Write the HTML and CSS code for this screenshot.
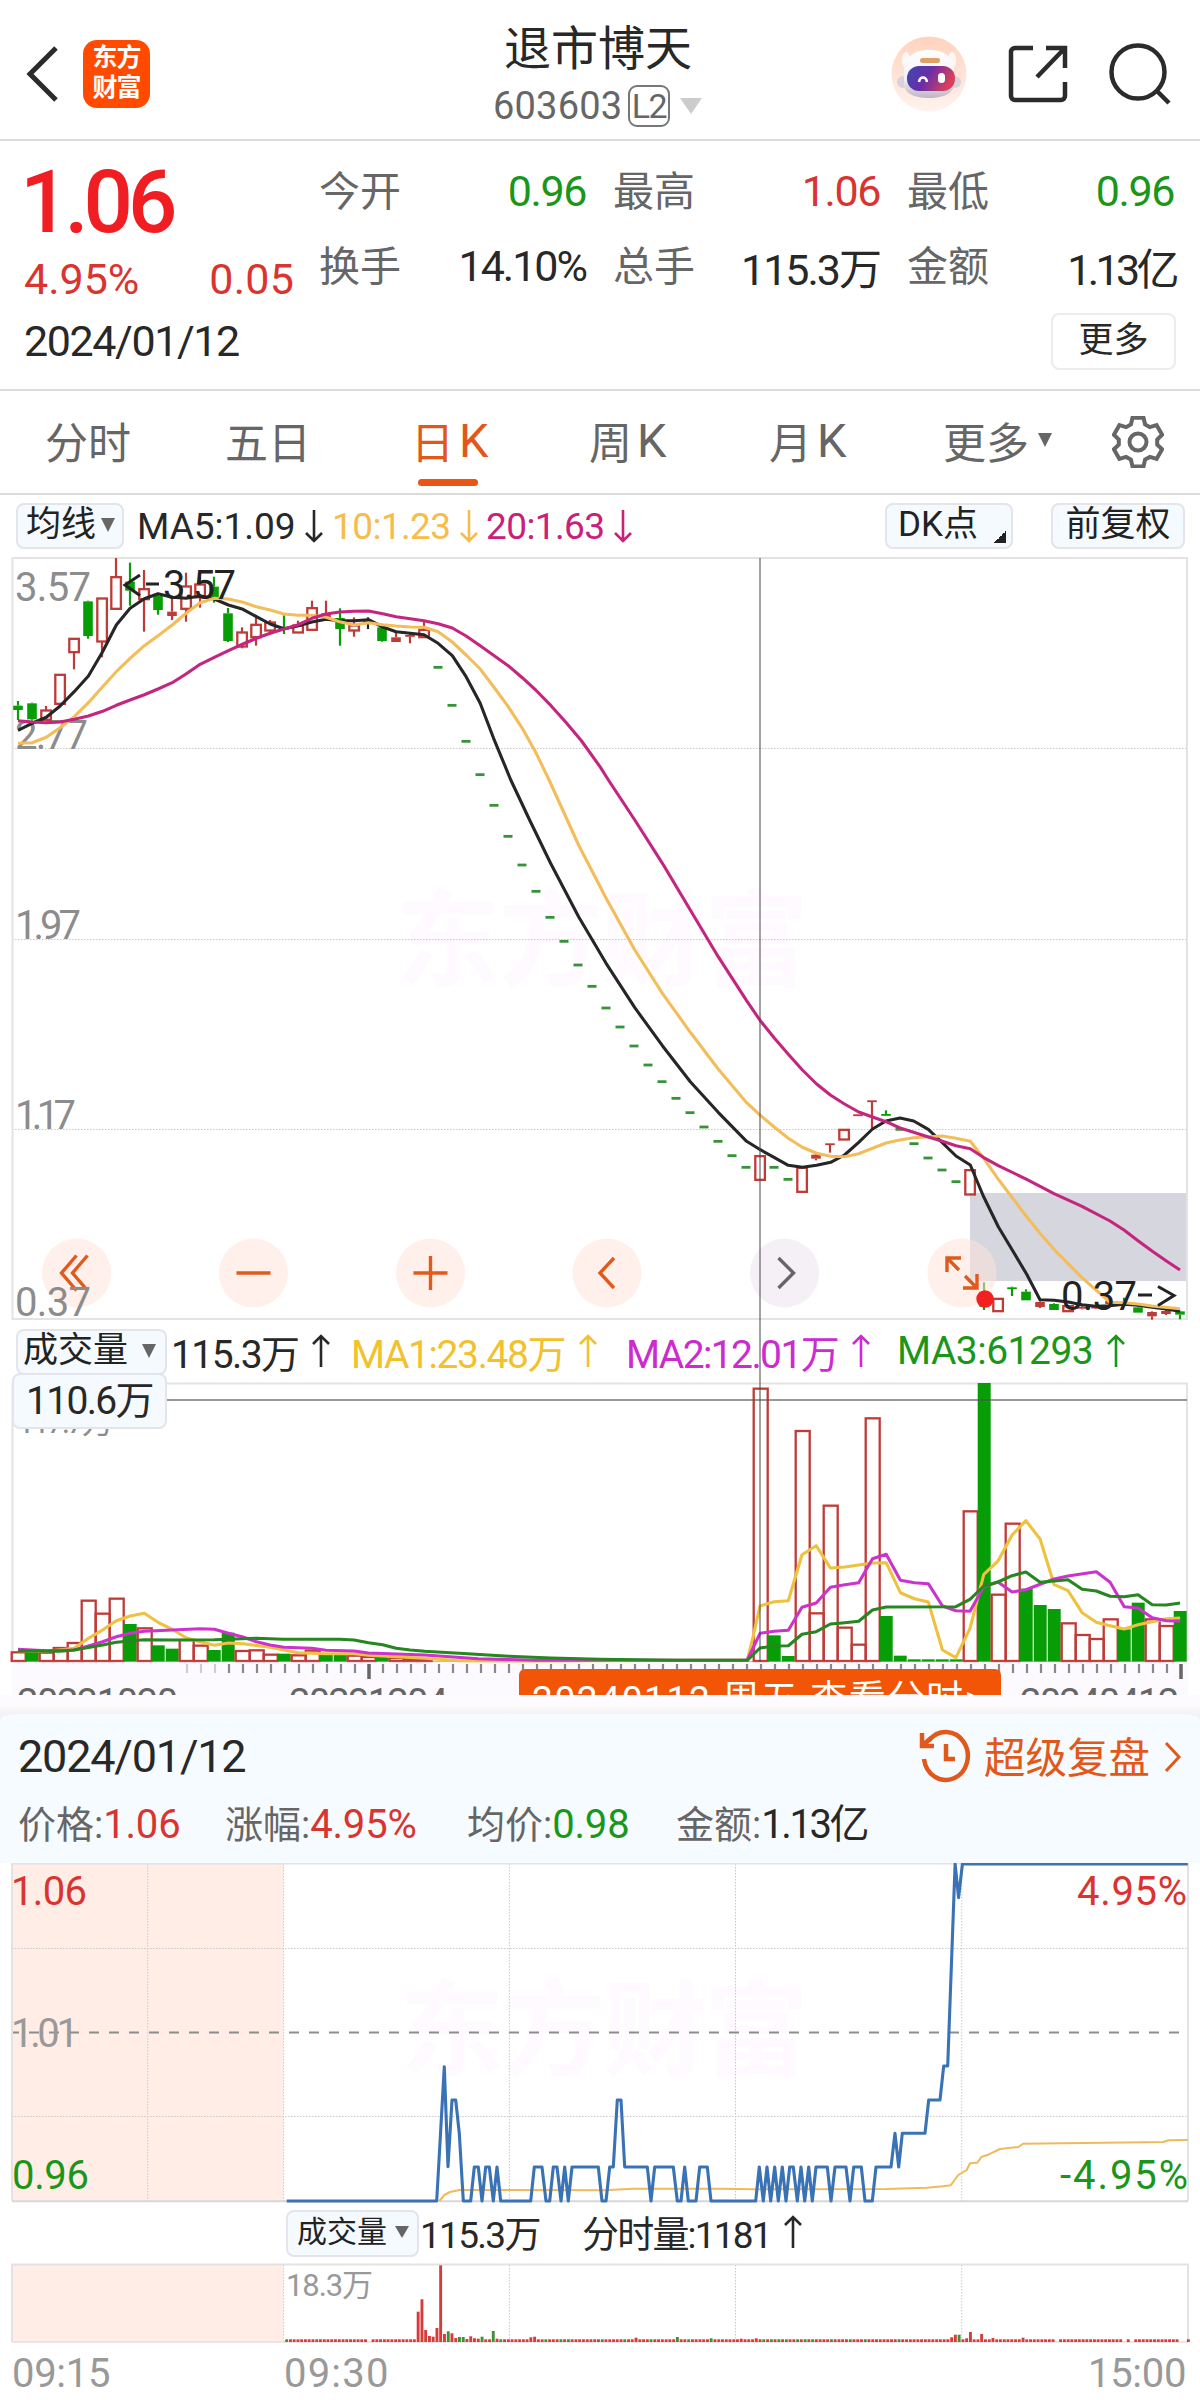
FILE: index.html
```html
<!DOCTYPE html>
<html lang="zh-CN">
<head>
<meta charset="utf-8">
<title>退市博天 603603</title>
<link rel="stylesheet" href="styles.css">
</head>
<body>
<main class="app">
  <header class="topbar">
    <svg class="back" viewBox="0 0 40 60"><path d="M33 4 7 30l26 26"/></svg>
    <div class="logo"><span>东方</span><span>财富</span></div>
    <div class="title">
      <h1>退市博天</h1>
      <div class="code"><span class="code-num">603603</span><span class="l2">L2</span><i class="tri tri-pale"></i></div>
    </div>
    <div class="actions">
      <svg class="robot" viewBox="0 0 76 76">
        <defs>
          <linearGradient id="halo" x1="0" y1="0" x2="0" y2="1"><stop offset="0" stop-color="#ffd3bd"/><stop offset="1" stop-color="#fff3ee"/></linearGradient>
          <linearGradient id="face" x1="0" y1="0" x2="1" y2="0.3"><stop offset="0" stop-color="#3c49ae"/><stop offset=".5" stop-color="#6a2da8"/><stop offset="1" stop-color="#d8405c"/></linearGradient>
          <linearGradient id="shell" x1="0" y1="0" x2="0" y2="1"><stop offset="0" stop-color="#fff"/><stop offset=".6" stop-color="#f4f0f5"/><stop offset="1" stop-color="#bdb6c4"/></linearGradient>
        </defs>
        <circle cx="38" cy="38" r="37.500" fill="url(#halo)"/>
        <ellipse cx="15" cy="24" rx="4" ry="8" fill="#fbf7f9"/><ellipse cx="61" cy="24" rx="4" ry="8" fill="#fbf7f9"/>
        <circle cx="12" cy="46" r="6" fill="#d9d2dc"/><circle cx="64" cy="46" r="6" fill="#d9d2dc"/>
        <path d="M13 36c0-15 10-22 25-22s25 7 25 22v12c0 9-10 14-25 14S13 57 13 48z" fill="url(#shell)"/>
        <rect x="29" y="22" width="20" height="5" rx="2.500" fill="#dfa266"/>
        <rect x="16" y="30" width="48" height="25" rx="12" fill="url(#face)"/>
        <path d="M28 46c1-6 7-6 8 0" fill="none" stroke="#fff" stroke-width="2.500"/><rect x="47" y="37" width="7" height="10" rx="3.500" fill="#fff"/>
      </svg>
      <svg class="share" viewBox="0 0 60 60"><path d="M25 4H7a4 4 0 0 0-4 4v44a4 4 0 0 0 4 4h46a4 4 0 0 0 4-4V38M38 4h19v20M57 4 29 33"/></svg>
      <svg class="search" viewBox="0 0 64 64"><circle cx="30" cy="30" r="26.500"/><path d="m49 49 12 12"/></svg>
    </div>
  </header>

  <section class="quote">
    <div class="price">
      <div class="last">1.06</div>
      <div class="change"><span>4.95%</span><span>0.05</span></div>
    </div>
    <dl class="stats">
      <div><dt>今开</dt><dd class="down">0.96</dd></div>
      <div><dt>最高</dt><dd class="up">1.06</dd></div>
      <div><dt>最低</dt><dd class="down">0.96</dd></div>
      <div><dt>换手</dt><dd>14.10%</dd></div>
      <div><dt>总手</dt><dd>115.3万</dd></div>
      <div><dt>金额</dt><dd class="tight">1.13亿</dd></div>
    </dl>
    <div class="quote-foot"><span class="date">2024/01/12</span><button class="more">更多</button></div>
  </section>

  <nav class="tabs">
    <a>分时</a><a>五日</a><a class="active">日<b>K</b></a><a>周<b>K</b></a><a>月<b>K</b></a><a class="tab-more">更多<i class="tri"></i></a>
    <svg class="gear" viewBox="0 0 52 52"><path d="M20.500 1.700h11l1.600 6.800 4.800 2.700 6.700-2 5.500 9.600-4.900 4.700v5.100l4.900 4.700-5.500 9.600-6.700-2-4.800 2.700-1.600 6.800h-11l-1.600-6.800-4.800-2.700-6.700 2-5.500-9.600 4.900-4.700v-5.100l-4.900-4.700 5.500-9.600 6.700 2 4.800-2.700z"/><circle cx="26" cy="26" r="8.500"/></svg>
  </nav>

  <section class="kline">
    <div class="legend ma-legend">
      <span class="chip chip-ma">均线<i class="tri"></i></span>
      <span class="ma5">MA5:1.09<svg class="arr" viewBox="0 0 18 34"><path d="M9 1v31M1 24l8 8 8-8"/></svg></span>
      <span class="ma10">10:1.23<svg class="arr" viewBox="0 0 18 34"><path d="M9 1v31M1 24l8 8 8-8"/></svg></span>
      <span class="ma20">20:1.63<svg class="arr" viewBox="0 0 18 34"><path d="M9 1v31M1 24l8 8 8-8"/></svg></span>
      <span class="chip chip-dk">DK点<i class="corner"></i></span>
      <span class="chip chip-adj">前复权</span>
    </div>
    <svg class="chart" id="k-chart" viewBox="0 557 1200 764" width="1200" height="764"></svg>
    <div class="legend vol-legend">
      <span class="chip chip-vol">成交量<i class="tri"></i></span>
      <span class="v0">115.3万<svg class="arr" viewBox="0 0 18 34"><path d="M9 33V2M1 10l8-8 8 8"/></svg></span>
      <span class="v1">MA1:23.48万<svg class="arr" viewBox="0 0 18 34"><path d="M9 33V2M1 10l8-8 8 8"/></svg></span>
      <span class="v2">MA2:12.01万<svg class="arr" viewBox="0 0 18 34"><path d="M9 33V2M1 10l8-8 8 8"/></svg></span>
      <span class="v3">MA3:61293<svg class="arr" viewBox="0 0 18 34"><path d="M9 33V2M1 10l8-8 8 8"/></svg></span>
    </div>
    <svg class="chart" id="vol-chart" viewBox="0 1382 1200 313" width="1200" height="313"></svg>
    <span class="cross-value">110.6万</span>
    <i class="crosshair"></i>
  </section>

  <section class="sheet">
    <div class="sheet-head">
      <span class="sheet-date">2024/01/12</span>
      <span class="review">
        <svg class="clock" viewBox="0 0 52 58"><path d="M5 31a22 24 0 1 0 5-18.500"/><path d="M3 5v13h12M4 17l8-7"/><path d="M27 16v15h9"/></svg>
        <span class="review-text">超级复盘</span>
        <svg class="chev" viewBox="0 0 18 32"><path d="m2 2 13 14L2 30"/></svg>
      </span>
    </div>
    <div class="sheet-stats">
      <span class="s1">价格:<b class="up">1.06</b></span><span class="s2">涨幅:<b class="up">4.95%</b></span><span class="s3">均价:<b class="down">0.98</b></span><span class="s4">金额:<b>1.13亿</b></span>
    </div>
  </section>
  <section class="intraday">
    <svg class="chart" id="min-chart" viewBox="0 1863 1200 340" width="1200" height="340"></svg>
    <div class="legend min-legend">
      <span class="chip chip-min">成交量<i class="tri"></i></span>
      <span class="m0">115.3万</span>
      <span class="m1">分时量:1181<svg class="arr" viewBox="0 0 18 34"><path d="M9 33V2M1 10l8-8 8 8"/></svg></span>
    </div>
    <svg class="chart" id="minvol-chart" viewBox="0 2263 1200 80" width="1200" height="80"></svg>
    <div class="times"><span>09:15</span><span class="open">09:30</span><span class="close">15:00</span></div>
  </section>
</main>
<script src="charts.js"></script>
</body>
</html>
```
FILE: styles.css
```css
* { box-sizing: border-box; }
body { margin: 0; background: #fff; color: #282828; font-family: Roboto, "Noto Sans CJK SC", sans-serif; }
h1, dl, dd { margin: 0; }
h1, b { font-weight: 400; }
svg { display: block; flex: none; }
.app { width: 1200px; height: 2400px; overflow: hidden; display: flex; flex-direction: column; }
.up { color: #d93430; }
.down { color: #1a961a; }

.tri { display: block; flex: none; border: solid transparent; border-width: 14px 7.500px 0; border-top-color: #666; }
.tri-pale { border-width: 16px 11px 0; border-top-color: #ccc; }

/* top bar */
.topbar { height: 141px; flex: none; display: grid; grid-template-columns: 83px 67px 1fr auto; align-items: center; border-bottom: 2px solid #dcdcdc; padding: 8px 28px 0 0; }
.back { width: 40px; height: 60px; margin-left: 23px; fill: none; stroke: #2b2b2b; stroke-width: 5; }
.logo { width: 67px; height: 68px; border-radius: 14px; background: #ff4a00; color: #fff; font-size: 25px; font-weight: 700; line-height: 30px; display: flex; flex-direction: column; align-items: center; justify-content: center; padding-bottom: 2px; letter-spacing: -1px; }
.title { margin-left: 304px; width: 300px; padding: 4px 0 0 39px; }
.title h1 { font-size: 47px; line-height: 60px; margin-left: 11px; margin-top: -4px; }
.code { display: flex; align-items: center; height: 46px; margin-top: 4px; color: #666; font-size: 38px; line-height: 46px; }
.code-num { width: 135px; letter-spacing: .2px; }
.l2 { width: 42px; height: 42px; border: 2px solid #777; border-radius: 9px; font-size: 34px; line-height: 38px; text-align: center; letter-spacing: -1.500px; margin-right: 10px; }
.actions { display: flex; align-items: center; }
.robot { width: 76px; height: 76px; }
.share { width: 60px; height: 60px; margin-left: 41px; fill: none; stroke: #2b2b2b; stroke-width: 4.500; }
.search { width: 64px; height: 64px; margin-left: 40px; fill: none; stroke: #2b2b2b; stroke-width: 4.500; }

/* quote */
.quote { height: 250px; flex: none; display: grid; grid-template-columns: 294px 1fr; grid-template-rows: 170px 1fr; padding: 0 24px 0 24px; border-bottom: 2px solid #dcdcdc; }
.price { width: 270px; }
.last { color: #f01d23; font-size: 87px; font-weight: 500; line-height: 90px; letter-spacing: -5px; margin: 16px 0 0 -4px; }
.change { display: flex; justify-content: space-between; color: #d93430; font-size: 43px; line-height: 50px; margin-top: 7px; }
.change span + span { letter-spacing: .2px; }
.stats { display: grid; grid-template-columns: 267px 267px 267px; column-gap: 27px; grid-auto-rows: 75px; padding-top: 12px; padding-left: 1px; }
.stats div { display: flex; justify-content: space-between; align-items: center; font-size: 43px; }
.stats dt { font-size: 41px; color: #666; margin-top: -5px; }
.stats dd { letter-spacing: -2px; }
.stats dd.tight { letter-spacing: -3.600px; margin-right: -2px; }
.stats dd.down, .stats dd.up { letter-spacing: -1.400px; }
.quote-foot { grid-column: 1 / 3; display: flex; justify-content: space-between; align-items: center; height: 60px; }
.date { font-size: 43px; letter-spacing: -1.400px; }
.more { width: 125px; height: 57px; border: 2px solid #ececf0; border-radius: 8px; background: #fff; font: 35px/50px Roboto, "Noto Sans CJK SC", sans-serif; color: #282828; padding: 0; }

/* tabs */
.tabs { height: 104px; flex: none; display: grid; grid-template-columns: 180px 186px 178px 180px 174px 193px 52px; padding-left: 45px; align-items: center; font-size: 43px; color: #666; border-bottom: 2px solid #dcdcdc; }
.tabs a { position: relative; display: flex; align-items: center; height: 100px; padding-bottom: 4px; }
.tabs b { margin-left: 5px; font-size: 47px; }
.tabs a.active { color: #e2581a; }
.tabs a.active::after { content: ""; position: absolute; left: 7px; bottom: 6px; width: 60px; height: 7px; border-radius: 4px; background: #ea5514; }
.tab-more .tri { margin-left: 9px; }
.gear { width: 52px; height: 52px; margin-left: -24px; fill: none; stroke: #666; stroke-width: 4; }

/* k line */
.kline { position: relative; flex: none; height: 1200px; }
.legend { display: flex; align-items: center; white-space: nowrap; }
.legend > span { display: flex; align-items: center; flex: none; }
.arr { width: 18px; height: 34px; fill: none; stroke: currentColor; stroke-width: 2.600; }
.chip { height: 46px; border: 2px solid #e3e4ec; border-radius: 8px; background: #f5faff; color: #222; font-size: 35px; line-height: 40px; padding-bottom: 2px; }
.ma-legend { height: 62px; font-size: 37px; padding-left: 16px; }
.chip-ma { width: 108px; padding-left: 8px; }
.chip-ma .tri { margin-left: 5px; }
.ma-legend .ma5 { width: 195px; margin-left: 13px; }
.ma-legend .ma10 { width: 154px; color: #f7bc4b; }
.ma-legend .ma20 { width: 160px; color: #c9207c; }
.ma-legend .arr { margin-left: 9px; }
.ma-legend .ma10, .ma-legend .ma20 { letter-spacing: -.6px; }
.chip-dk { width: 128px; padding-left: 11px; margin-left: 239px; position: relative; }
.corner { position: absolute; right: 5px; bottom: 4px; width: 12px; height: 12px; background: linear-gradient(135deg, transparent 50%, #222 50%); }
.chip-adj { width: 134px; margin-left: 38px; justify-content: center; }
.vol-legend { height: 61px; font-size: 39px; padding-left: 16px; }
.chip-vol { width: 151px; padding-left: 5px; }
.chip-vol .tri { margin-left: 14px; }
.vol-legend > span:not(.chip) { padding-bottom: 2px; }
.vol-legend .arr { margin-left: 14px; }
.v0 { margin-left: 4px; width: 180px; letter-spacing: -1.600px; }
.v1 { width: 275px; color: #f2c12e; letter-spacing: -1.400px; }
.v2 { width: 271px; color: #cc2bd0; letter-spacing: -1.600px; }
.v3 { color: #1a961a; letter-spacing: -.5px; }
.cross-value { position: absolute; left: 12px; top: 878px; width: 155px; height: 56px; border: 2px solid #e3e4ec; border-radius: 8px; background: #f5faff; font-size: 39px; line-height: 52px; text-align: center; letter-spacing: -1.700px; }
.crosshair { position: absolute; left: 759px; top: 63px; width: 2px; height: 1104px; background: rgba(70, 70, 70, .5); }

/* review sheet */
.sheet { flex: none; height: 168px; border-top: 11px solid #fdfbff; background: linear-gradient(#fbfafb, #f3f3f3 8px); display: flex; flex-direction: column; }
.sheet-head { margin-top: 8px; height: 85px; border-radius: 16px 16px 0 0 / 8px 8px 0 0; background: #f6fbff; display: flex; align-items: center; justify-content: space-between; padding: 0 18px 0 18px; }
.sheet-date { font-size: 45px; letter-spacing: -1.200px; }
.review { display: flex; align-items: center; color: #e2581a; font-size: 41.500px; white-space: nowrap; }
.review svg { fill: none; stroke: #e2581a; }
.review-text { padding-bottom: 4px; }
.clock { width: 52px; height: 58px; stroke-width: 4.500; margin-right: 13px; }
.chev { width: 18px; height: 32px; margin-left: 14px; stroke-width: 3; }
.sheet-stats { flex: 1; background: #f6fbff; display: flex; font-size: 38px; line-height: 51px; color: #666; padding-left: 18px; }
.sheet-stats b { font-size: 40px; letter-spacing: -.2px; }
.sheet-stats .s4 b { color: #282828; letter-spacing: -2.400px; }
.s1 { width: 207px; } .s2 { width: 242px; } .s3 { width: 209px; }

/* intraday */
.intraday { flex: none; }
.min-legend { height: 60px; padding-left: 286px; font-size: 37px; }
.chip-min { width: 133px; height: 47px; font-size: 30px; padding-left: 9px; }
.chip-min .tri { margin-left: 8px; border-width: 12px 7.500px 0; }
.m0 { margin-left: 1px; width: 162px; letter-spacing: -1.700px; }
.m1 { letter-spacing: -1.800px; }
.min-legend .m0, .min-legend .m1 { padding-bottom: 2px; }
.min-legend .arr { margin-left: 13px; }
.times { display: flex; font-size: 40px; line-height: 50px; color: #999; padding: 6px 14px 0 12px; }
.times span { letter-spacing: -.3px; width: 98px; }
.times .open { margin-left: 174px; width: 120px; letter-spacing: 1.200px; }
.times .close { margin-left: auto; }

/* chart marks */
.chart text { font-family: Roboto, "Noto Sans CJK SC", sans-serif; }
.frame { fill: none; stroke: #e3e3e3; stroke-width: 2; }
.dots { stroke: #c9c9c9; stroke-width: 1; stroke-dasharray: 1.500 1.500; }
.line { fill: none; stroke-width: 3.100; stroke-linejoin: round; }
.watermark { font-weight: 700; fill: #fefaff; font-size: 104px; }
```
FILE: charts.js
```js
const RED = '#bf3b38', GREEN = '#069d06';
const STEP = 14, X0 = 18;
const out = (id, parts) => { document.getElementById(id).innerHTML = parts.join(''); };
const cx = i => X0 + STEP * i;

const rect = (x, y, w, h, a) => `<rect x="${x}" y="${y}" width="${w}" height="${h}" ${a}/>`;
const line = (x1, y1, x2, y2, a) => `<line x1="${x1}" y1="${y1}" x2="${x2}" y2="${y2}" ${a}/>`;
const text = (s, x, y, size, fill, len, a = '') =>
  `<text x="${x}" y="${y}" font-size="${size}" fill="${fill}" ${len ? `textLength="${len}"` : ''} ${a}>${s}</text>`;

// Point lists are grouped by the panel scale they were sampled at: [originX, originY, scaleX, points]
const curve = (groups, stroke, cls = 'line', extra = '') => {
  const pts = groups.flatMap(([ox, oy, sx, p]) =>
    p.trim().split(/\s+/).map(q => { const [x, y] = q.split(',').map(Number); return `${(ox + x / sx).toFixed(1)},${(oy + y / 3).toFixed(1)}`; }));
  return `<polyline class="${cls}" stroke="${stroke}" points="${pts.join(' ')}" ${extra}/>`;
};
const A = 2.6133;

// ---- daily candles: kind, high, open/close top, open/close bottom, low
const early = [
  'g 963 977 990 1020','g 968 970 1018 1022','r 978 990 1018 1022','r 883 883 970 970','r 775 775 815 868','g 662 664 768 776',
  'r 654 654 783 832','r 534 590 685 690','g 548 605 632 677','r 570 626 656 755','g 645 648 690 704','R 648 695 708 720',
  'r 578 618 685 725','r 590 612 650 683','g 590 620 652 668','g 684 700 783 786','r 742 756 798 805','r 712 733 770 797',
  'r 720 726 750 765','g 706 743 747 762','r 722 735 756 756','r 662 683 748 750','R 662 700 712 715','g 685 714 747 797',
  'r 712 735 750 770','k 712 720 724 747','g 738 742 783 785','R 757 772 786 786','R 757 765 770 790','r 722 748 770 770',
  '- 862','- 976','- 1084','- 1184'];
const middle = [76,169,255,334,412,484,555,619,684,741,798,855,905,955,998,1041,1084,1127,1162].map(v => `- ${v}`).concat([
  'r 1127 1127 1198 1198','- 1162','- 1198','r 1162 1162 1234 1234','R 1122 1124 1136 1141','R 1090 1090 1095 1118',
  'r 1048 1048 1077 1077','R 1003 1003 1008 1008','R 961 961 966 1045','g 991 1002 1007 1007']);
const late = ['- 268','- 311','- 354','- 390','- 425','r 389 389 462 462','g 727 755 800 810','r 775 775 812 816','g 740 742 747 768',
  'g 748 755 781 781','R 784 786 801 804','g 790 792 810 810','r 795 797 812 812','R 798 800 806 808','R 798 800 804 806','R 778 783 792 797',
  'g 773 786 792 796','g 800 802 818 818','R 814 816 829 839','R 808 813 822 825','g 812 814 824 838'];
const candles = [...early.map(s => [380, s]), ...middle.map(s => [780, s]), ...late.map(s => [1040, s])];

const drawCandle = ([base, s], i) => {
  const [kind, ...v] = s.split(' ');
  const y = v.map(n => base + n / 3), x = cx(i);
  if (kind === '-') return rect(x - 4.5, y[0] - 1.4, 9, 2.8, `fill="#38923a"`);
  const [h, t, b, l] = y;
  const c = kind === 'g' ? GREEN : kind === 'k' ? '#222' : RED;
  const wick = line(x, h, x, t, `stroke="${c}" stroke-width="2.2"`) + line(x, b, x, l, `stroke="${c}" stroke-width="2.2"`);
  const body = kind === 'r'
    ? rect(x - 4.7, t + .5, 9.6, Math.max(2, b - t), `fill="none" stroke="${c}" stroke-width="2.3"`)
    : rect(x - 4.8, t, 9.6, Math.max(1.8, b - t), `fill="${c}"`);
  return wick + body;
};

const C2 = [0, 380, A], C4 = [300, 780, A], C5 = [700, 1040, 3];
const ma5 = [[...C2, '47,1051 84,1030 121,1012 157,978 194,935 231,888 268,815 304,735 340,685 377,656 413,641 450,652 486,655 525,648 560,657 597,675 635,688 670,710 706,732 742,746 778,738 815,726 852,718 888,722 925,722 963,719 1000,741 1035,755 1072,760 1108,764 1145,790 1182,827 1218,890 1255,970 1290,1075 1335,1200'],
  [...C4, '600,120 655,250 728,410 800,550 875,683 947,797 1020,905 1093,997 1167,1084 1203,1109 1240,1133 1276,1156 1313,1162 1350,1156 1387,1147 1423,1125 1460,1087 1496,1047'],
  [...C5, '558,243 600,234 641,243 685,268 727,308 768,348 811,375 850,468 895,560 940,635 980,703 1020,779 1062,781 1105,786 1146,794 1188,799 1230,797 1272,793 1314,796 1356,802 1398,807 1440,814']];
const ma10 = [[...C2, '47,1090 84,1088 121,1072 157,1043 194,1010 231,968 268,920 304,875 340,835 377,797 413,767 450,735 486,700 523,668 560,655 597,657 635,667 670,680 706,690 742,702 778,706 815,706 852,712 888,725 925,735 963,728 1000,734 1035,738 1072,741 1108,742 1145,755 1182,786 1218,825 1255,867 1290,920 1328,980 1365,1045 1400,1117 1435,1200'],
  [...C4, '728,195 800,355 875,510 947,640 1020,757 1093,867 1167,968 1203,1006 1240,1042 1276,1075 1313,1102 1350,1120 1387,1129 1423,1130 1460,1121 1496,1105'],
  [...C5, '558,309 600,300 641,293 685,290 727,288 768,295 811,304 850,353 895,418 980,530 1020,580 1062,628 1146,713 1188,750 1230,787 1272,788 1314,792 1356,798 1440,806']];
const ma20 = [[...C2, '47,1022 84,1026 121,1028 157,1026 194,1018 231,1008 268,994 304,976 340,960 377,944 413,927 450,908 486,882 523,853 560,832 597,812 635,792 670,775 706,760 742,747 778,735 815,715 852,702 888,696 925,694 963,693 1000,701 1035,710 1072,716 1108,722 1145,731 1182,744 1218,768 1255,797 1328,857 1365,893 1400,930 1440,977 1480,1028 1520,1083 1568,1160'],
  [...C4, '806,0 875,120 947,250 1020,390 1093,530 1167,662 1203,722 1240,775 1276,823 1313,870 1350,912 1387,946 1423,972 1460,996 1496,1011'],
  [...C5, '558,245 600,264 641,277 685,291 727,304 768,317 811,326 850,352 895,377 980,418 1062,461 1146,499 1230,543 1272,570 1314,602 1356,633 1398,662 1440,690']];

const O = '#e05a1c';
const tool = (x, d, grey) => `<circle cx="${x}" cy="1273" r="34.500" fill="${grey ? '#ece4ee' : '#ffe4da'}" fill-opacity=".55"/>` +
  `<path transform="translate(${x} 1273)" d="${d}" fill="none" stroke="${grey ? '#666' : O}" stroke-width="3.400"/>`;

out('k-chart', [
  `<text class="watermark" x="396" y="978" textLength="412">东方财富</text>`,
  rect(970, 1193, 217, 88, 'fill="#d6d6df"'),
  line(12, 748.5, 1187, 748.5, 'class="dots"'), line(12, 939.5, 1187, 939.5, 'class="dots"'), line(12, 1129.5, 1187, 1129.5, 'class="dots"'),
  rect(12.5, 558, 1174.5, 761, 'class="frame"'),
  text('3.57', 15, 601, 40, '#8c8c8c', 76), text('2.77', 15, 748.5, 40, '#8c8c8c', 73), text('1.97', 15, 939, 40, '#8c8c8c', 66),
  text('1.17', 15, 1129, 40, '#8c8c8c', 61),
  ...candles.map(drawCandle),
  curve(ma5, '#262626'), curve(ma10, '#f3bd5b'), curve(ma20, '#c4267f'),
  text('3.57', 163, 599, 40, '#222', 73), `<path d="M140 575 125 585l15 10.500M146 584h13" fill="none" stroke="#222" stroke-width="3"/>`,
  text('0.37', 1061, 1310, 40, '#222', 76), `<path d="M1138 1295h14M1158 1286.500l16 9-16 10" fill="none" stroke="#222" stroke-width="3"/>`,
  tool(76.5, 'M0-17.500-15 0 0 17.500M11-17.500-4 0l15 17.500'), tool(253.5, 'M-17 0h34'), tool(430.5, 'M-17 0h34M0-17v34'),
  tool(607, 'M7-15-7 0 7 15'), tool(784.5, 'M-6-15 9 0-6 15', true),
  tool(962, 'M-15-1v-14h14M-15-15-3-3M3 3l12 12M15 1v14H1'),
  text('0.37', 15, 1316, 40, '#8c8c8c', 76),
  '<circle cx="985" cy="1299" r="8.700" fill="#f32020"/>',
]);

// ---- daily volume
const vols = [];
'r1357 g1355 r1358 r1344 r1329 r1202 r1241 r1196 g1272 r1285 g1336 g1346 r1320 r1337 g1350 g1298 r1353 r1351 r1364 g1361 r1366 r1352 g1362 g1360 r1367 r1371 g1368 r1374 r1376 r1378'
  .split(' ').forEach((s, i) => vols.push([i, s[0], 1200 + s.slice(1) / 3]));
'r206 g946 g1008 r333 r880 r557 r923 r974 r295 g888 g1007 g1018 g1018 g1018 g1018 r574 g189 r824 r611 g806 g855 g867 r910 r945 r957 r898 g928 g848 r898 r918 g873'
  .split(' ').forEach((s, i) => vols.push([i + 53, s[0], 1320 + s.slice(1) / 3]));
const BASE = 1661;
const drawVol = ([i, k, y]) => {
  const l = cx(i) - 6.3, w = Math.min(13, 1187 - l);
  return k === 'g' ? rect(l, y, w, BASE - y + .5, `fill="${GREEN}"`)
    : rect(l, y, 14, Math.max(1, BASE - y), `fill="none" stroke="${RED}" stroke-width="2.3"`);
};
const C6 = [0, 1200, A], C7 = [600, 1320, A];
const vy = [[...C6, '47,1352 121,1354 194,1345 231,1315 268,1290 304,1262 340,1248 377,1240 413,1267 450,1288 486,1313 523,1325 560,1336 597,1329 635,1331 706,1342 742,1350 778,1358 850,1361 925,1361 963,1366 1035,1370 1110,1375 1200,1382 1400,1383'],
  [...C7, '385,1020 400,950 418,858 455,845 492,842 528,704 565,677 602,744 640,741 712,729 748,728 785,818 822,836 858,846 895,990 930,1013 967,925 1003,763 1040,723 1077,645 1113,602 1150,657 1187,794 1223,812 1260,878 1297,907 1333,917 1370,927 1406,914 1443,905 1480,896 1516,894']];
const vm = [[...C6, '47,1348 121,1352 194,1350 231,1338 268,1325 304,1310 340,1300 377,1294 450,1290 523,1286 560,1288 597,1300 635,1311 670,1325 706,1335 742,1342 815,1345 852,1351 925,1353 963,1359 1110,1365 1250,1376 1400,1381'],
  [...C7, '385,1020 418,940 455,934 492,931 528,862 565,849 602,802 640,794 676,788 712,716 748,703 785,781 822,788 858,791 895,858 930,872 967,874 1003,800 1040,786 1077,816 1113,809 1150,793 1187,777 1223,768 1297,755 1333,787 1370,860 1406,864 1443,893 1480,902 1516,904']];
const vg = [[...C6, '47,1352 157,1354 194,1350 268,1335 304,1327 340,1323 377,1319 450,1320 560,1319 670,1315 740,1318 888,1318 925,1320 963,1328 1000,1334 1035,1345 1072,1350 1110,1354 1200,1360 1330,1369 1440,1374 1568,1378'],
  [...C7, '200,1021 385,1021 418,984 455,978 492,977 528,943 565,935 602,912 640,908 676,904 712,870 748,861 930,860 967,838 1003,798 1040,786 1077,767 1113,756 1150,787 1187,783 1223,779 1260,808 1297,813 1333,829 1370,830 1406,824 1443,854 1480,855 1516,849']];
const ticks = [];
for (let i = 0; i <= 71; i++) {
  const x = 187 + STEP * i, big = i === 13 || i === 71;
  ticks.push(line(x, 1664, x, big ? 1679 : 1673, `stroke="${i < 3 ? '#d0ccd2' : big ? '#666' : '#888'}" stroke-width="${big ? 3.5 : 2.2}"`));
}
out('vol-chart', [
  rect(12, 1662, 1176, 33, 'fill="#fdfaff"'),
  `<path class="frame" d="M12.500 1661V1383.500H1187V1661"/>`,
  text('117.7万', 17, 1433, 32, '#8c8c8c', 97),
  ...vols.map(drawVol), line(12, 1661.5, 1187, 1661.5, 'stroke="#4d9a4d" stroke-width="1" opacity=".5"'),
  line(166, 1400, 1187, 1400, 'stroke="#555" stroke-width="1.700" opacity=".8"'),
  curve(vy, '#eec140'), curve(vm, '#cc33cc'), curve(vg, '#26861f'),
  ...ticks,
  text('20231030', 17, 1716, 38, '#666', 161), text('20231204', 289, 1716, 38, '#666', 159), text('20240412', 1020, 1716, 38, '#666', 159),
  rect(519, 1669, 482, 40, 'rx="6" fill="#f25505"'),
  text('20240112 周五 查看分时&gt;', 532, 1712, 37, '#fff', 452),
]);

// ---- minute price
const B10 = [250, 2040, 3], B11 = [720, 2040, 3], B9 = [600, 1700, A];
const price = [[...B10, '110,483 560,483 583,80 594,380 606,180 617,180 628,280 640,483 662,483 673,381 685,381 696,483 707,381 718,381 730,483 741,381 752,483 842,483 853,381 876,381 888,483 899,483 910,381 921,381 933,483 944,381 955,483 966,381 1045,381 1056,483 1068,483 1079,381 1090,381 1102,180 1113,180 1124,381 1192,381 1203,483 1214,381 1270,381 1282,483 1293,483 1304,381 1315,483 1338,483 1349,381 1372,381 1383,483'],
  [...B11, '107,483 118,381 130,483 141,381 152,483 164,381 175,483 187,381 198,483 209,381 220,381 232,483 243,381 254,483 266,381 277,483 288,381 322,381 333,483 345,381 378,381 390,483 401,381 424,381 435,483 457,483 468,381 513,381 525,280 536,381 547,280 615,280 626,180 660,180 671,78 683,78'],
  [...B9, '928,492 937,593 947,492 1536,492']];
const avg = [[...B10, '568,483 583,465 600,456 628,450 1060,451 1150,446'],
  [...B11, '0,446 100,448 500,447 620,443 670,439 692,436 715,405 740,390 750,370 772,368 785,350 805,344 840,327 895,321 910,311 1330,306 1345,301 1404,300']];
const cols = [147.7, 283.6, 509.4, 735.5, 961.7];
out('min-chart', [
  rect(12, 1863, 271.5, 338, 'fill="#ffede6"'),
  `<text class="watermark" x="400" y="2068" textLength="408">东方财富</text>`,
  ...cols.map(x => line(x, 1864, x, 2201, 'class="dots"')),
  line(12, 1948.5, 1187, 1948.5, 'class="dots"'), line(12, 2116.5, 1187, 2116.5, 'class="dots"'),
  line(12, 2032.5, 1187, 2032.5, 'stroke="#8c8c8c" stroke-width="2.200" stroke-dasharray="10 10" stroke-dashoffset="3"'),
  `<path d="M12 2201V1863.500H1188V2201" class="frame"/>`, line(12, 2201.3, 1188, 2201.3, 'stroke="#d9d6d9" stroke-width="2"'),
  curve(avg, '#f0b95c', 'line', 'style="stroke-width:2"'), curve(price, '#3a73b5'),
  text('1.06', 11, 1905, 40, '#d93430', 76), text('4.95%', 1077, 1905, 40, '#d93430', 110),
  text('1.01', 11, 2047, 40, '#999', 68), text('0.96', 12, 2189, 40, '#1a961a', 77), text('-4.95%', 1060, 2189, 40, '#1a961a', 128),
]);

// ---- minute volume
const tall = { 35: 91, 36: 128, 37: 36, 38: 18, 39: 16, 40: 42, 41: 230, 42: 24, 43: 32, 44: 26, 45: 12, 46: 15, 47: 15, 48: 9, 49: 17, 50: 11, 51: 10, 52: 16,
  55: 33, 56: 10, 65: 14, 66: 16, 93: 13, 104: 15, 113: 11, 121: 10, 125: 11, 177: 14, 178: 22, 179: 22, 181: 11, 182: 30, 185: 24, 188: 12, 196: 13 };
const green = new Set([0, 43, 46, 47, 52, 55, 57, 69, 73, 75, 84, 90, 97, 104, 107, 113, 127, 129, 131, 133, 136, 138, 140, 145, 150, 154, 163, 179]);
const gap = new Set([22, 205, 223, 225, 238, 239]);
const minutes = [];
for (let i = 0; i <= 240; i++) {
  if (gap.has(i)) continue;
  const h = (tall[i] || 8) / 3;
  minutes.push(rect((285.2 + i * 3.757).toFixed(1), (2342 - h).toFixed(1), 2.9, h.toFixed(1), `fill="${green.has(i) ? '#3d9334' : '#d63c3a'}"`));
}
out('minvol-chart', [
  rect(12, 2264, 271.5, 78, 'fill="#ffede6"'),
  ...cols.slice(1).map(x => line(x, 2265, x, 2341, 'class="dots"')),
  `<path d="M12 2342V2264.500H1188V2342" class="frame"/>`, line(12, 2342, 1188, 2342, 'stroke="#e6dede" stroke-width="1.500"'),
  text('18.3万', 286, 2296, 31, '#999', 87),
  ...minutes,
]);
```
